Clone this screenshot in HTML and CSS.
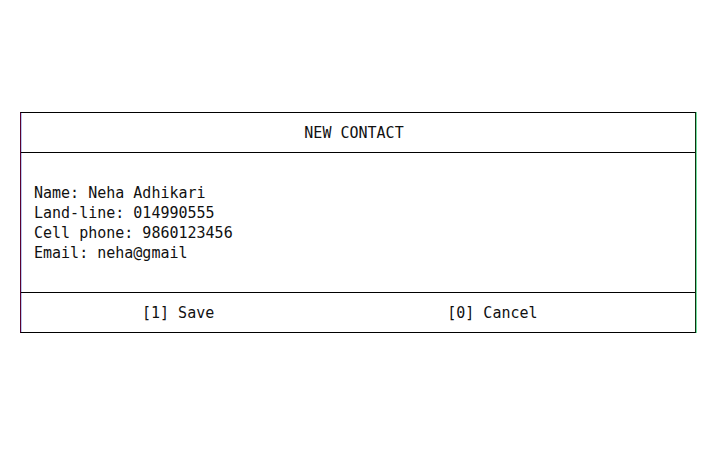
FILE: index.html
```html
<!DOCTYPE html>
<html>
<head>
<meta charset="utf-8">
<link rel="stylesheet" href="styles.css">
</head>
<body>
<div class="dialog">
  <div class="header">NEW CONTACT</div>
  <div class="content">
    <div class="line">Name: Neha Adhikari</div>
    <div class="line">Land-line: 014990555</div>
    <div class="line">Cell phone: 9860123456</div>
    <div class="line">Email: neha@gmail</div>
  </div>
  <div class="footer">
    <span class="btn">[1] Save</span>
    <span class="btn btn-cancel">[0] Cancel</span>
  </div>
</div>
</body>
</html>
```
FILE: styles.css
```css
html, body {
  margin: 0;
  padding: 0;
  background: #fff;
}
body {
  padding-top: 112px;
  padding-left: 20px;
  font-family: "DejaVu Sans Mono", "Liberation Mono", monospace;
  font-size: 15px;
  line-height: 20px;
  color: #111;
}
.dialog {
  width: 674px;
  border: 1px solid #000;
  border-left-color: #5a0030;
  border-right-color: #103010;
  box-shadow: inset 1px 0 0 #b8c8f0, 1px 0 0 #70e0a0;
}
.header {
  height: 39px;
  display: flex;
  align-items: center;
  justify-content: center;
  padding-right: 8px;
  border-bottom: 1px solid #000;
}
.content {
  box-sizing: border-box;
  height: 140px;
  padding: 30px 0 0 13px;
  border-bottom: 1px solid #000;
}
.footer {
  height: 39px;
  display: flex;
  align-items: center;
  padding-left: 121px;
  gap: 233px;
}
```
